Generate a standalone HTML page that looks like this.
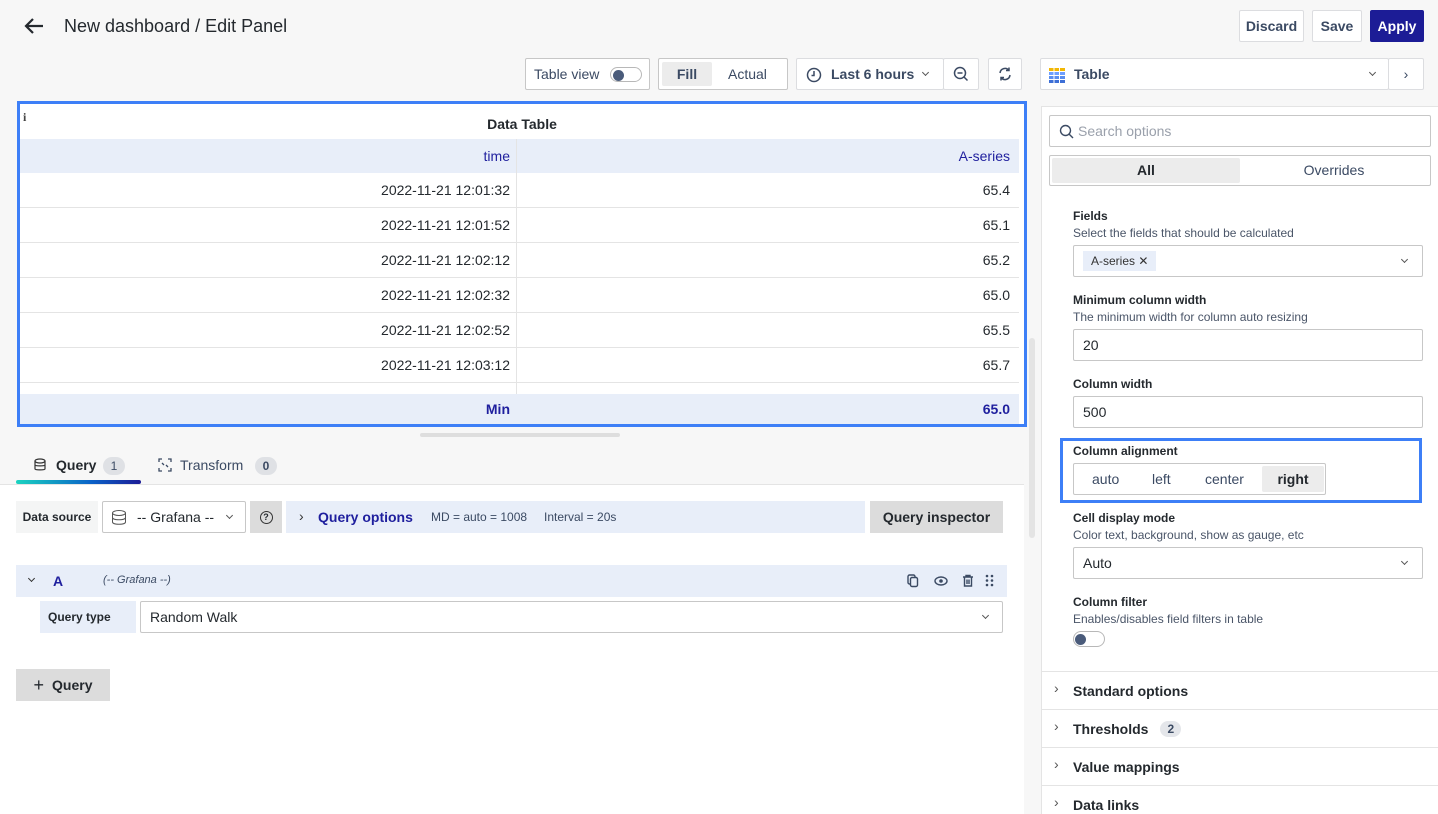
<!DOCTYPE html>
<html><head><meta charset="utf-8"><style>
*{box-sizing:border-box;margin:0;padding:0}
html,body{width:1438px;height:814px;overflow:hidden}
body{background:#f7f7f7;font-family:"Liberation Sans",sans-serif;color:#24292e;position:relative;font-size:14px}
.a{position:absolute}
.btn{position:absolute;border:1px solid #dcdde0;background:#fff;border-radius:2px;font-size:14px;color:#3b4a63;display:flex;align-items:center;justify-content:center;font-weight:bold}
.row{position:absolute;left:0;width:999px;height:35px;border-bottom:1px solid #e4e4e4;font-size:14px;color:#24292e}
.row span{position:absolute;top:9px}
.c1{right:509px}.c2{right:9px}
.lbl{position:absolute;left:1073px;font-size:12px;font-weight:bold;color:#24292e}
.desc{position:absolute;left:1073px;font-size:12px;color:#4a5568}
.inp{position:absolute;left:1073px;width:350px;height:32px;border:1px solid #c7c7c7;border-radius:2px;background:#fff;font-size:14px;padding:0 9px;display:flex;align-items:center}
.sec{position:absolute;left:1041px;width:397px;height:38px;border-top:1px solid #e4e4e4;font-size:14px;font-weight:bold;color:#24292e;padding-left:32px;display:flex;align-items:center}
.sec:before{content:"›";position:absolute;left:13px;top:8px;font-weight:normal;color:#555}
.chev{position:absolute;width:6px;height:6px;border-right:1.5px solid #555;border-bottom:1.5px solid #555;transform:rotate(45deg)}
</style></head><body>

<svg class="a" style="left:24px;top:17px" width="20" height="18" viewBox="0 0 20 18"><path d="M9 2L2 9l7 7M2 9h17" stroke="#24292e" stroke-width="2.2" fill="none"/></svg>
<div class="a" style="left:64px;top:16px;font-size:18px;color:#24292e">New dashboard / Edit Panel</div>

<div class="btn" style="left:1239px;top:10px;width:65px;height:32px">Discard</div>
<div class="btn" style="left:1312px;top:10px;width:50px;height:32px">Save</div>
<div class="btn" style="left:1370px;top:10px;width:54px;height:32px;background:#1c1c96;color:#fff;border-color:#1c1c96">Apply</div>

<div class="btn" style="left:525px;top:58px;width:125px;height:32px;font-weight:normal;border-color:#c7c7c7;justify-content:flex-start;padding-left:8px">Table view
<div class="a" style="left:84px;top:8px;width:32px;height:15px;border:1px solid #b8b8b8;border-radius:8px"><div class="a" style="left:2px;top:1.5px;width:11px;height:11px;border-radius:50%;background:#4a5b7a"></div></div></div>
<div class="btn" style="left:658px;top:58px;width:130px;height:32px;border-color:#c7c7c7;justify-content:flex-start;font-weight:normal">
<div class="a" style="left:3px;top:3px;width:50px;height:24px;background:#ececec;border-radius:2px;font-weight:bold;display:flex;align-items:center;justify-content:center">Fill</div>
<div class="a" style="left:69px;top:7px">Actual</div></div>
<div class="btn" style="left:796px;top:58px;width:148px;height:32px;justify-content:flex-start;padding-left:34px">Last 6 hours
<svg class="a" style="left:9px;top:8px" width="16" height="16"><circle cx="8" cy="8" r="6.5" stroke="#3b4a63" stroke-width="1.5" fill="none"/><path d="M8 4v4.5h-2.5" stroke="#3b4a63" stroke-width="1.5" fill="none"/></svg>
<div class="chev" style="left:126px;top:11px;width:5px;height:5px"></div></div>
<div class="btn" style="left:943px;top:58px;width:36px;height:32px">
<svg width="16" height="16"><circle cx="7" cy="7" r="5.5" stroke="#3b4a63" stroke-width="1.5" fill="none"/><path d="M4.5 7h5M11 11l3.5 3.5" stroke="#3b4a63" stroke-width="1.5"/></svg></div>
<div class="btn" style="left:988px;top:58px;width:34px;height:32px">
<svg width="16" height="16"><path d="M3 7a5 5 0 0 1 9-2.5M13 9a5 5 0 0 1-9 2.5M12 1.5v3h-3M4 14.5v-3h3" stroke="#3b4a63" stroke-width="1.5" fill="none"/></svg></div>

<div class="btn" style="left:1040px;top:58px;width:349px;height:32px;justify-content:flex-start;padding-left:33px;color:#3b4a63">Table
<svg class="a" style="left:8px;top:9px" width="16" height="15"><rect x="0" y="0" width="16" height="3" fill="#f2b705"/><rect x="0" y="4" width="16" height="3" fill="#6e9fff"/><rect x="0" y="8" width="16" height="3" fill="#5a8ef0"/><rect x="0" y="12" width="16" height="3" fill="#3d6fd6"/><path d="M5 0v15M10.5 0v15" stroke="#fff" stroke-width="1"/></svg>
<div class="chev" style="left:329px;top:11px;width:5px;height:5px"></div></div>
<div class="btn" style="left:1388px;top:58px;width:36px;height:32px;font-weight:normal">›</div>

<div class="a" style="left:17px;top:101px;width:1010px;height:326px;border:3px solid #3d7ff7;background:#fff">
<div class="a" style="left:3px;top:6px;font-family:'Liberation Serif',serif;font-size:12px;font-weight:bold;color:#444">i</div>
<div class="a" style="left:0;width:1004px;top:12px;text-align:center;font-size:14px;font-weight:bold">Data Table</div>
<div class="a" style="left:0;top:35px;width:999px;height:34px;background:#e8eef9;color:#1f1f9e">
<span class="a" style="right:509px;top:9px">time</span><span class="a" style="right:9px;top:9px">A-series</span></div>
<div class="a" style="left:496px;top:35px;width:1px;height:285px;background:#e4e4e4"></div>
<div class="row" style="top:69px"><span class="c1">2022-11-21 12:01:32</span><span class="c2">65.4</span></div>
<div class="row" style="top:104px"><span class="c1">2022-11-21 12:01:52</span><span class="c2">65.1</span></div>
<div class="row" style="top:139px"><span class="c1">2022-11-21 12:02:12</span><span class="c2">65.2</span></div>
<div class="row" style="top:174px"><span class="c1">2022-11-21 12:02:32</span><span class="c2">65.0</span></div>
<div class="row" style="top:209px"><span class="c1">2022-11-21 12:02:52</span><span class="c2">65.5</span></div>
<div class="row" style="top:244px"><span class="c1">2022-11-21 12:03:12</span><span class="c2">65.7</span></div>
<div class="a" style="left:0;top:290px;width:999px;height:30px;background:#e8eef9;color:#1f1f9e;font-weight:bold">
<span class="a" style="right:509px;top:7px">Min</span><span class="a" style="right:9px;top:7px">65.0</span></div>
</div>
<div class="a" style="left:420px;top:433px;width:200px;height:4px;background:#dedede;border-radius:2px"></div>
<div class="a" style="left:1029px;top:338px;width:6px;height:200px;background:#e4e4e4;border-radius:3px"></div>

<svg class="a" style="left:34px;top:458px" width="12" height="14"><ellipse cx="6" cy="3" rx="5" ry="2" stroke="#333" fill="none" stroke-width="1.2"/><path d="M1 3v8c0 1.2 10 1.2 10 0V3M1 7c0 1.2 10 1.2 10 0" stroke="#333" fill="none" stroke-width="1.2"/></svg>
<div class="a" style="left:56px;top:457px;font-size:14px;font-weight:bold;color:#24292e">Query</div>
<div class="a" style="left:103px;top:457px;width:22px;height:18px;border-radius:9px;background:#dfe1e5;font-size:12px;text-align:center;line-height:18px;color:#3b4a63">1</div>
<svg class="a" style="left:158px;top:458px" width="14" height="14"><path d="M1 4V1h3M10 1h3v3M13 10v3h-3M4 13H1v-3M4 5l2 2M10 9l-2-2" stroke="#3b4a63" stroke-width="1.3" fill="none"/></svg>
<div class="a" style="left:180px;top:457px;font-size:14px;color:#3b4a63">Transform</div>
<div class="a" style="left:255px;top:457px;width:22px;height:18px;border-radius:9px;background:#dfe1e5;font-size:12px;text-align:center;line-height:18px;color:#3b4a63;font-weight:bold">0</div>
<div class="a" style="left:16px;top:480px;width:125px;height:4px;border-radius:2px;background:linear-gradient(90deg,#1bd3c0,#0a62c8 60%,#1c1c96)"></div>
<div class="a" style="left:0;top:484px;width:1024px;height:1px;background:#e4e4e4"></div>
<div class="a" style="left:0;top:485px;width:1024px;height:329px;background:#fff"></div>

<div class="a" style="left:16px;top:501px;width:82px;height:32px;background:#f4f5f5;font-size:12px;font-weight:bold;display:flex;align-items:center;justify-content:center">Data source</div>
<div class="a" style="left:102px;top:501px;width:144px;height:32px;border:1px solid #c7c7c7;border-radius:2px;background:#fff;font-size:14px;padding-left:34px;display:flex;align-items:center">-- Grafana --
<svg class="a" style="left:8px;top:7px" width="16" height="18"><ellipse cx="8" cy="4" rx="6.5" ry="2.5" stroke="#555" fill="none"/><path d="M1.5 4v9c0 3 13 3 13 0V4M1.5 8.5c0 3 13 3 13 0" stroke="#555" fill="none"/></svg>
<div class="chev" style="left:124px;top:11px;width:5px;height:5px"></div></div>
<div class="a" style="left:250px;top:501px;width:32px;height:32px;background:#dcdcdc;display:flex;align-items:center;justify-content:center"><div style="width:13px;height:13px;border:1.5px solid #333;border-radius:50%;font-size:9px;text-align:center;line-height:10px;font-weight:bold">?</div></div>
<div class="a" style="left:286px;top:501px;width:579px;height:32px;background:#e8eef9;font-size:14px">
<span class="a" style="left:13px;top:7px;color:#333">›</span>
<span class="a" style="left:32px;top:8px;color:#1f1f9e;font-weight:bold">Query options</span>
<span class="a" style="left:145px;top:9px;font-size:12px;color:#3b4a63">MD = auto = 1008</span>
<span class="a" style="left:258px;top:9px;font-size:12px;color:#3b4a63">Interval = 20s</span></div>
<div class="a" style="left:870px;top:501px;width:133px;height:32px;background:#dcdcdc;font-size:14px;font-weight:bold;display:flex;align-items:center;justify-content:center">Query inspector</div>

<div class="a" style="left:16px;top:565px;width:991px;height:32px;background:#e8eef9">
<div class="chev" style="left:13px;top:11px;width:5px;height:5px;border-color:#333"></div>
<span class="a" style="left:37px;top:8px;font-weight:bold;color:#1f1f9e">A</span>
<span class="a" style="left:87px;top:9px;font-size:11px;font-style:italic;color:#3b4a63">(-- Grafana --)</span>
<svg class="a" style="left:890px;top:9px" width="90" height="14"><rect x="2" y="1" width="7" height="9" rx="1.5" stroke="#3b4a63" fill="none" stroke-width="1.4"/><rect x="4.5" y="3.5" width="7" height="9" rx="1.5" stroke="#3b4a63" fill="#e8eef9" stroke-width="1.4"/><ellipse cx="35" cy="7" rx="6" ry="4" stroke="#3b4a63" fill="none" stroke-width="1.4"/><circle cx="35" cy="7" r="1.8" fill="#3b4a63"/><path d="M57 3h10M60 3V1.5h4V3M58.5 3v9h7V3M61 5.5v4.5M63 5.5v4.5" stroke="#3b4a63" fill="none" stroke-width="1.4"/><g fill="#3b4a63"><circle cx="81" cy="2" r="1.3"/><circle cx="86" cy="2" r="1.3"/><circle cx="81" cy="6.5" r="1.3"/><circle cx="86" cy="6.5" r="1.3"/><circle cx="81" cy="11" r="1.3"/><circle cx="86" cy="11" r="1.3"/></g></svg></div>
<div class="a" style="left:40px;top:601px;width:96px;height:32px;background:#e8eef9;font-size:12px;font-weight:bold;padding-left:8px;display:flex;align-items:center">Query type</div>
<div class="a" style="left:140px;top:601px;width:863px;height:32px;border:1px solid #c7c7c7;border-radius:2px;background:#fff;padding-left:9px;display:flex;align-items:center">Random Walk<div class="chev" style="left:842px;top:11px;width:5px;height:5px"></div></div>
<div class="a" style="left:16px;top:669px;width:94px;height:32px;background:#dcdcdc;font-weight:bold;font-size:14px;display:flex;align-items:center;justify-content:center"><span style="font-size:18px;font-weight:normal;margin-right:8px">+</span>Query</div>

<div class="a" style="left:1041px;top:106px;width:397px;height:708px;background:#fff;border:1px solid #e4e4e4;border-right:none;border-bottom:none"></div>
<div class="a" style="left:1049px;top:115px;width:382px;height:32px;border:1px solid #c7c7c7;border-radius:2px;color:#9aa0ab;padding-left:28px;display:flex;align-items:center">Search options
<svg class="a" style="left:9px;top:8px" width="15" height="15"><circle cx="6.5" cy="6.5" r="5" stroke="#3b4a63" fill="none" stroke-width="1.4"/><path d="M10 10l4 4" stroke="#3b4a63" stroke-width="1.4"/></svg></div>
<div class="a" style="left:1049px;top:155px;width:382px;height:31px;border:1px solid #c7c7c7;border-radius:2px">
<div class="a" style="left:2px;top:2px;width:188px;height:25px;background:#ececec;border-radius:2px;font-weight:bold;text-align:center;line-height:25px">All</div>
<div class="a" style="left:190px;top:2px;width:188px;height:25px;text-align:center;line-height:25px;color:#3b4a63">Overrides</div></div>

<div class="lbl" style="top:209px">Fields</div>
<div class="desc" style="top:226px">Select the fields that should be calculated</div>
<div class="inp" style="top:245px;height:32px"><div style="background:#e8eef9;font-size:12px;padding:3px 8px;color:#333">A-series ✕</div><div class="chev" style="left:328px;top:11px;width:5px;height:5px"></div></div>
<div class="lbl" style="top:293px">Minimum column width</div>
<div class="desc" style="top:310px">The minimum width for column auto resizing</div>
<div class="inp" style="top:329px">20</div>
<div class="lbl" style="top:377px">Column width</div>
<div class="inp" style="top:396px">500</div>
<div class="a" style="left:1060px;top:438px;width:362px;height:65px;border:3px solid #3d7ff7"></div>
<div class="lbl" style="top:444px">Column alignment</div>
<div class="a" style="left:1073px;top:463px;width:253px;height:32px;border:1px solid #c7c7c7;border-radius:2px;color:#3b4a63">
<span class="a" style="left:18px;top:7px">auto</span><span class="a" style="left:78px;top:7px">left</span><span class="a" style="left:131px;top:7px">center</span>
<div class="a" style="left:188px;top:2px;width:62px;height:26px;background:#ececec;border-radius:2px;font-weight:bold;color:#24292e;text-align:center;line-height:26px">right</div></div>
<div class="lbl" style="top:511px">Cell display mode</div>
<div class="desc" style="top:528px">Color text, background, show as gauge, etc</div>
<div class="inp" style="top:547px">Auto<div class="chev" style="left:328px;top:11px;width:5px;height:5px"></div></div>
<div class="lbl" style="top:595px">Column filter</div>
<div class="desc" style="top:612px">Enables/disables field filters in table</div>
<div class="a" style="left:1073px;top:631px;width:32px;height:16px;border:1px solid #b8b8b8;border-radius:8px"><div class="a" style="left:1px;top:1.5px;width:11px;height:11px;border-radius:50%;background:#4a5b7a"></div></div>

<div class="sec" style="top:671px">Standard options</div>
<div class="sec" style="top:709px">Thresholds <span style="margin-left:12px;background:#e4e6ea;border-radius:9px;padding:1px 7px;font-size:12px;color:#3b4a63">2</span></div>
<div class="sec" style="top:747px">Value mappings</div>
<div class="sec" style="top:785px">Data links</div>
</body></html>
